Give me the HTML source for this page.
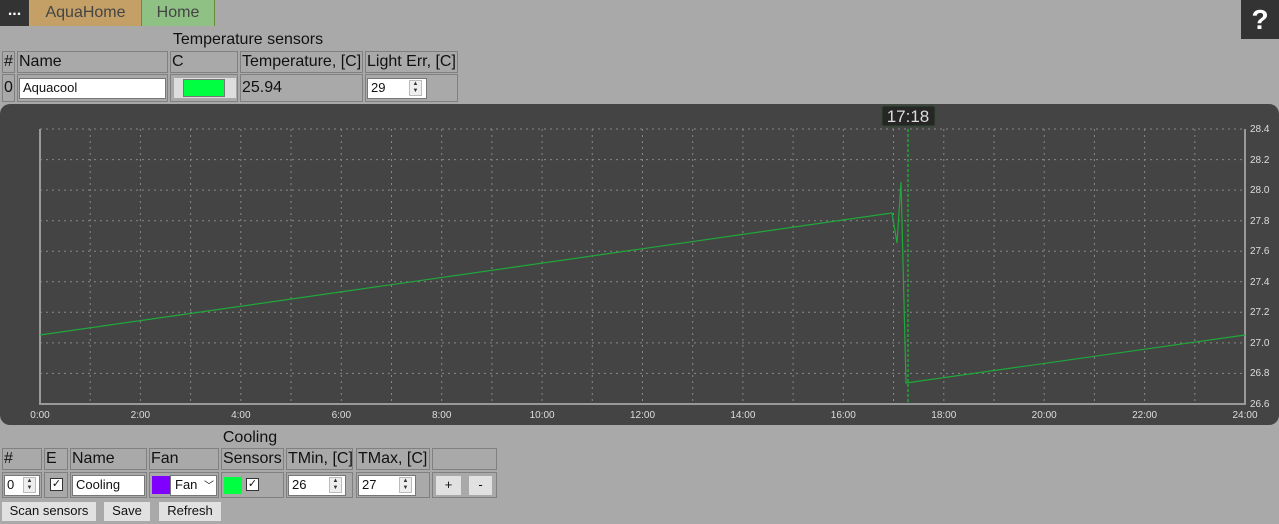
<!DOCTYPE html>
<html><head><style>
body{margin:0;width:1279px;height:524px;background:#a9a9a9;font-family:"Liberation Sans",Arial,sans-serif;position:relative;overflow:hidden;color:#111}
.a{position:absolute;box-sizing:border-box}
.c{position:absolute;box-sizing:border-box;border:1px solid #808080;font-size:16px;line-height:19px;padding-left:1px;white-space:nowrap}
.in{position:absolute;box-sizing:border-box;background:#fff;border:1px solid #777;font-size:12px;padding-left:3px;line-height:18px}
.sp{position:absolute;width:13px;height:16px;border:1px solid #bbb;background:#eee;box-sizing:border-box;font-size:6px;line-height:7px;text-align:center;color:#333}
.btn{position:absolute;box-sizing:border-box;background:#e1e1e1;font-size:13px;text-align:center;line-height:18px;height:19px}
.cb{position:absolute;width:13px;height:13px;border:1px solid #333;box-sizing:border-box;background:#fff;font-size:11px;line-height:11px;text-align:center}
</style></head><body>
<div class="a" style="left:0;top:0;width:29px;height:26px;background:#333;color:#fff;font-size:16px;font-weight:bold;text-align:center;line-height:22px">...</div>
<div class="a" style="left:30px;top:0;width:111px;height:26px;background:#c4a066;color:#444;font-size:16px;text-align:center;line-height:25px">AquaHome</div>
<div class="a" style="left:141px;top:0;width:74px;height:26px;background:#8fc185;border-left:1px solid #6a8a3a;border-right:1px solid #6a8a3a;color:#444;font-size:16px;text-align:center;line-height:25px">Home</div>
<div class="a" style="left:1241px;top:0;width:38px;height:39px;background:#333;color:#fff;font-size:28px;font-weight:bold;text-align:center;line-height:40px">?</div>

<div class="a" style="left:0;top:30px;width:460px;text-align:center;font-size:16px;line-height:19px;padding-left:36px">Temperature sensors</div>
<div class="c" style="left:2px;top:51px;width:13px;height:22px">#</div>
<div class="c" style="left:17px;top:51px;width:151px;height:22px">Name</div>
<div class="c" style="left:170px;top:51px;width:68px;height:22px">C</div>
<div class="c" style="left:240px;top:51px;width:123px;height:22px">Temperature, [C]</div>
<div class="c" style="left:365px;top:51px;width:93px;height:22px">Light Err, [C]</div>
<div class="c" style="left:2px;top:74px;width:13px;height:28px;line-height:26px">0</div>
<div class="c" style="left:17px;top:74px;width:151px;height:28px"><div class="in" style="left:1px;top:3px;width:147px;height:21px;font-size:13px">Aquacool</div></div>
<div class="c" style="left:170px;top:74px;width:68px;height:28px"><div class="a" style="left:3px;top:3px;width:62px;height:20px;background:#ddd"><div class="a" style="left:9px;top:1px;width:42px;height:18px;background:#00ff40;border:1px solid #777"></div></div></div>
<div class="c" style="left:240px;top:74px;width:123px;height:28px;line-height:26px">25.94</div>
<div class="c" style="left:365px;top:74px;width:93px;height:28px"><div class="in" style="left:1px;top:3px;width:60px;height:21px;font-size:13px">29<div class="sp" style="left:41px;top:1px">▲<br>▼</div></div></div>

<div class="a" style="left:0;top:104px;width:1279px;height:321px;background:#444;border-radius:10px"></div>
<svg class="a" style="left:0;top:104px" width="1279" height="321">
<g stroke="#888" stroke-dasharray="2,4" stroke-width="1">
<line x1="40" y1="25" x2="1245" y2="25"/><line x1="40" y1="55.6" x2="1245" y2="55.6"/><line x1="40" y1="86.1" x2="1245" y2="86.1"/><line x1="40" y1="116.7" x2="1245" y2="116.7"/><line x1="40" y1="147.2" x2="1245" y2="147.2"/><line x1="40" y1="177.8" x2="1245" y2="177.8"/><line x1="40" y1="208.3" x2="1245" y2="208.3"/><line x1="40" y1="238.9" x2="1245" y2="238.9"/><line x1="40" y1="269.4" x2="1245" y2="269.4"/>
<line x1="90.2" y1="25" x2="90.2" y2="300"/><line x1="140.4" y1="25" x2="140.4" y2="300"/><line x1="190.6" y1="25" x2="190.6" y2="300"/><line x1="240.8" y1="25" x2="240.8" y2="300"/><line x1="291" y1="25" x2="291" y2="300"/><line x1="341.3" y1="25" x2="341.3" y2="300"/><line x1="391.5" y1="25" x2="391.5" y2="300"/><line x1="441.7" y1="25" x2="441.7" y2="300"/><line x1="491.9" y1="25" x2="491.9" y2="300"/><line x1="542.1" y1="25" x2="542.1" y2="300"/><line x1="592.3" y1="25" x2="592.3" y2="300"/><line x1="642.5" y1="25" x2="642.5" y2="300"/><line x1="692.7" y1="25" x2="692.7" y2="300"/><line x1="742.9" y1="25" x2="742.9" y2="300"/><line x1="793.1" y1="25" x2="793.1" y2="300"/><line x1="843.3" y1="25" x2="843.3" y2="300"/><line x1="893.5" y1="25" x2="893.5" y2="300"/><line x1="943.8" y1="25" x2="943.8" y2="300"/><line x1="994" y1="25" x2="994" y2="300"/><line x1="1044.2" y1="25" x2="1044.2" y2="300"/><line x1="1094.4" y1="25" x2="1094.4" y2="300"/><line x1="1144.6" y1="25" x2="1144.6" y2="300"/><line x1="1194.8" y1="25" x2="1194.8" y2="300"/>
</g>
<g stroke="#999" stroke-width="2" fill="none"><polyline points="40,25 40,300 1245,300 1245,25"/></g>
<line x1="908" y1="25" x2="908" y2="300" stroke="#1ea832" stroke-width="1.5" stroke-dasharray="3,2"/>
<polyline points="40,231 892,109 897,139 901,78 906,279 1245,231" fill="none" stroke="#1fa83a" stroke-width="1.2"/>
<rect x="882" y="2" width="53" height="20" rx="2" fill="#262626" stroke="#2c4a2c"/>
<text x="908" y="18" fill="#ddd" font-size="17" text-anchor="middle" font-family="Liberation Sans">17:18</text>
<g fill="#ddd" font-size="10" font-family="Liberation Sans">
<text x="1250" y="28">28.4</text><text x="1250" y="59">28.2</text><text x="1250" y="89">28.0</text><text x="1250" y="120">27.8</text><text x="1250" y="150">27.6</text><text x="1250" y="181">27.4</text><text x="1250" y="211">27.2</text><text x="1250" y="242">27.0</text><text x="1250" y="272">26.8</text><text x="1250" y="303">26.6</text>
</g>
<g fill="#ddd" font-size="10" font-family="Liberation Sans" text-anchor="middle">
<text x="40" y="314">0:00</text><text x="140.4" y="314">2:00</text><text x="240.8" y="314">4:00</text><text x="341.3" y="314">6:00</text><text x="441.7" y="314">8:00</text><text x="542.1" y="314">10:00</text><text x="642.5" y="314">12:00</text><text x="742.9" y="314">14:00</text><text x="843.3" y="314">16:00</text><text x="943.8" y="314">18:00</text><text x="1044.2" y="314">20:00</text><text x="1144.6" y="314">22:00</text><text x="1245" y="314">24:00</text>
</g>
</svg>

<div class="a" style="left:0;top:428px;width:500px;text-align:center;font-size:16px;line-height:19px">Cooling</div>
<div class="c" style="left:2px;top:448px;width:40px;height:22px">#</div>
<div class="c" style="left:44px;top:448px;width:24px;height:22px">E</div>
<div class="c" style="left:70px;top:448px;width:77px;height:22px">Name</div>
<div class="c" style="left:149px;top:448px;width:70px;height:22px">Fan</div>
<div class="c" style="left:221px;top:448px;width:63px;height:22px">Sensors</div>
<div class="c" style="left:286px;top:448px;width:67px;height:22px">TMin, [C]</div>
<div class="c" style="left:356px;top:448px;width:74px;height:22px">TMax, [C]</div>
<div class="c" style="left:432px;top:448px;width:65px;height:22px"></div>

<div class="c" style="left:2px;top:472px;width:40px;height:26px"><div class="in" style="left:1px;top:2px;width:36px;height:21px;font-size:13px;padding-left:2px">0<div class="sp" style="left:18px;top:1px">▲<br>▼</div></div></div>
<div class="c" style="left:44px;top:472px;width:24px;height:26px"><div class="cb" style="left:5px;top:5px">✓</div></div>
<div class="c" style="left:70px;top:472px;width:77px;height:26px"><div class="in" style="left:1px;top:2px;width:73px;height:21px;font-size:13px">Cooling</div></div>
<div class="c" style="left:149px;top:472px;width:70px;height:26px"><div class="a" style="left:2px;top:3px;width:18px;height:18px;background:#8000ff"></div><div class="in" style="left:20px;top:2px;width:47px;height:21px;font-size:13px;padding-left:4px">Fan <span style="font-size:10px;margin-left:3px">﹀</span></div></div>
<div class="c" style="left:221px;top:472px;width:63px;height:26px"><div class="a" style="left:2px;top:4px;width:18px;height:17px;background:#00ff40"></div><div class="cb" style="left:24px;top:5px">✓</div></div>
<div class="c" style="left:286px;top:472px;width:67px;height:26px"><div class="in" style="left:1px;top:2px;width:58px;height:21px;font-size:13px">26<div class="sp" style="left:40px;top:1px">▲<br>▼</div></div></div>
<div class="c" style="left:356px;top:472px;width:74px;height:26px"><div class="in" style="left:1px;top:2px;width:58px;height:21px;font-size:13px">27<div class="sp" style="left:40px;top:1px">▲<br>▼</div></div></div>
<div class="c" style="left:432px;top:472px;width:65px;height:26px"><div class="btn" style="left:3px;top:3px;width:25px">+</div><div class="btn" style="left:36px;top:3px;width:23px">-</div></div>

<div class="btn" style="left:2px;top:502px;width:94px">Scan sensors</div>
<div class="btn" style="left:104px;top:502px;width:46px">Save</div>
<div class="btn" style="left:159px;top:502px;width:62px">Refresh</div>
</body></html>
